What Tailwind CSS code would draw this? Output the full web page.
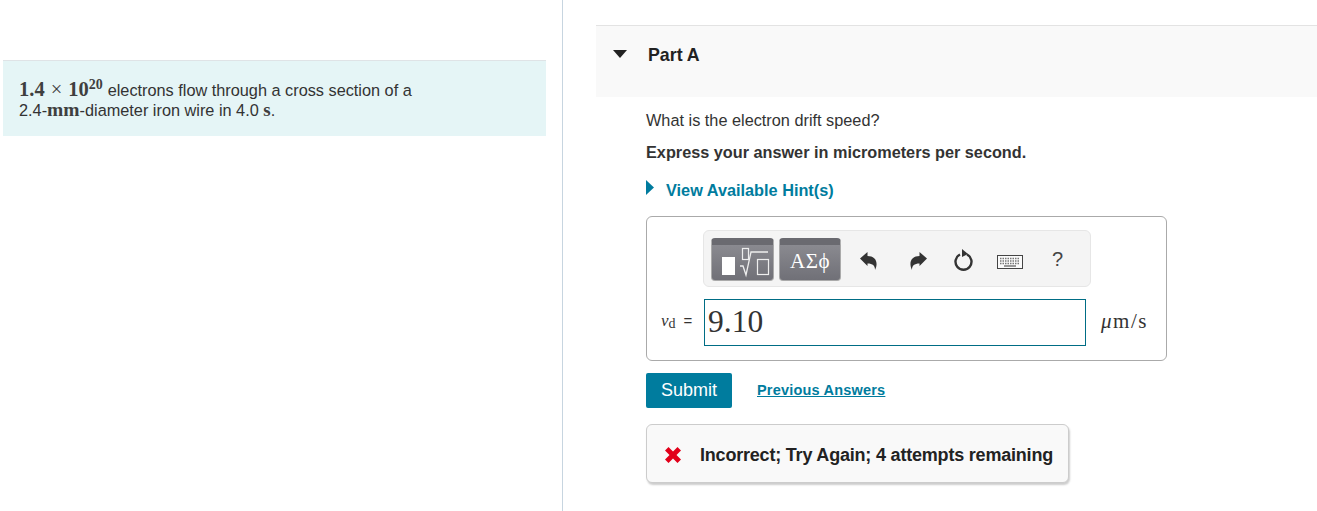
<!DOCTYPE html>
<html lang="en">
<head>
    <meta charset="UTF-8">
    <title>Part A</title>
    <script src="https://cdn.jsdelivr.net/npm/@tailwindcss/browser@4"></script>
</head>
<body class="bg-white font-['Liberation_Sans',sans-serif] text-[#333]">
<div class="flex h-[511px] w-[1317px] overflow-hidden">

    <!-- Intro -->
    <div class="w-[563px] shrink-0 border-r border-[#c7d5e0] pt-[60px] pl-[3px]">
        <div class="w-[543px] h-[76px] bg-[#e5f5f6] border-t border-[#dfe3e6] pl-[16px] pt-[19px] text-[16.3px] leading-[20px]">
            <p class="h-[21px] -mt-[1px] whitespace-nowrap"><span class="font-['Liberation_Serif',serif] text-[20.500px] font-bold text-[#3f3f3f]">1.4<span class="font-normal mx-[6px]">×</span>10<sup class="text-[14px] leading-none top-[-7px]">20</sup></span><span class="ml-[5px]">electrons flow through a cross section of a</span></p>
            <p class="h-[20px] whitespace-nowrap">2.4-<span class="font-['Liberation_Serif',serif] font-bold text-[19.5px] text-[#3f3f3f]">mm</span>-diameter iron wire in 4.0 <span class="font-['Liberation_Serif',serif] text-[19px] font-bold text-[#3f3f3f]">s</span>.</p>
        </div>
    </div>

    <!-- Part A -->
    <div class="flex-1 pl-[33px] pt-[25px]">
        <div class="flex h-[72px] bg-[#f9f9f9] border-t border-[#e3e3e3] pl-[17px] pt-[18px]">
            <svg class="mt-[6px]" width="14" height="8" viewBox="0 0 14 8"><path d="M0 0h14L7 8z" fill="#222"/></svg>
            <h2 class="ml-[21px] mt-[1px] text-[17.800px] leading-[21px] font-bold text-[#222]">Part A</h2>
        </div>

        <div class="pl-[50px]">
            <p class="mt-[13px] text-[16.3px] leading-[20px]">What is the electron drift speed?</p>
            <p class="mt-[12px] text-[16.250px] leading-[20px] font-bold">Express your answer in micrometers per second.</p>
            <div class="mt-[18px] flex h-[20px]">
                <svg width="8" height="15" viewBox="0 0 8 15"><path d="M0 0l8 7.500-8 7.500z" fill="#007b9e"/></svg>
                <a class="ml-[12px] text-[16.300px] leading-[20px] font-bold text-[#007c9e]">View Available Hint(s)</a>
            </div>

            <!-- Answer box -->
            <div class="mt-[16px] w-[521px] h-[145px] rounded-[6px] border border-[#aaa] pt-[13px]">
                <div class="ml-[56px] w-[388px] h-[57px] rounded-[6px] border border-[#e6e6e6] bg-[#f4f4f4] flex items-center pl-[7px]">
                    <div class="w-[63px] h-[43px] mt-[1px] rounded-[4px] border border-[#aaa] border-t-[7px] border-t-[#6a6a70] bg-gradient-to-b from-[#8a8a90] to-[#707077] flex items-end">
                        <svg width="61" height="35" viewBox="0 0 61 35" fill="none">
                            <rect x="10" y="12" width="13" height="18" fill="#fff"/>
                            <rect x="30.500" y="3.500" width="6" height="11" stroke="#eee" stroke-width="1.200"/>
                            <path d="M28 21l3 0 3 9 5-23h17" stroke="#eee" stroke-width="1.300"/>
                            <rect x="45.500" y="14.500" width="11" height="15" stroke="#eee" stroke-width="1.200"/>
                        </svg>
                    </div>
                    <div class="ml-[5px] w-[62px] h-[43px] mt-[1px] rounded-[4px] border border-[#aaa] border-t-[7px] border-t-[#6a6a70] bg-gradient-to-b from-[#8a8a90] to-[#707077] text-center text-white font-['Liberation_Serif',serif] text-[21px] leading-[33px] tracking-[0.5px]">ΑΣϕ</div>
                    <svg class="ml-[19px] mt-[6px]" width="18" height="20" viewBox="0 0 18 20"><path d="M0 6.500L7.500 0v4c6 0 9.500 3.500 9 9-.2 2-.8 3.500-1.500 5 .2-4-2-6.500-7.500-6.500V14z" fill="#333"/></svg>
                    <svg class="ml-[31px] mt-[6px]" width="18" height="20" viewBox="0 0 18 20"><path d="M18 6.500L10.500 0v4c-6 0-9.500 3.500-9 9 .2 2 .8 3.500 1.500 5-.2-4 2-6.500 7.500-6.500V14z" fill="#333"/></svg>
                    <svg class="ml-[26px] mt-[2px]" width="22" height="24" viewBox="0 0 22 24" fill="none"><path d="M7 6.500a8 8 0 1 0 7 0" stroke="#333" stroke-width="2.400"/><path d="M9 1l6 5-6 3z" fill="#333"/></svg>
                    <svg class="ml-[22px] mt-[7px]" width="26" height="14" viewBox="0 0 26 14" fill="none">
                        <rect x="0.500" y="0.500" width="25" height="13" fill="#fafafa" stroke="#444"/>
                        <path d="M3 3.500h20M3 6h20M3 8.500h20" stroke="#777" stroke-width="1.500" stroke-dasharray="1.500 1"/>
                        <path d="M7 11h12" stroke="#777" stroke-width="1.500"/>
                    </svg>
                    <span class="ml-[29px] text-[20px] leading-none text-[#444]">?</span>
                </div>

                <div class="mt-[12px] flex items-center h-[47px]">
                    <span class="ml-[14px] w-[43px] -mt-[3px] whitespace-nowrap font-['Liberation_Serif',serif] text-[17px] text-[#333]"><i>v</i><span class="text-[14px] relative top-[2px]">d</span><span class="ml-[8px] text-[15px] font-['Liberation_Sans',sans-serif]">=</span></span>
                    <div class="w-[382px] h-[47px] border border-[#006d85] pl-[3px] font-['Liberation_Serif',serif] text-[31.500px] leading-[44px] text-[#333]">9.10</div>
                    <span class="ml-[15px] -mt-[1px] font-['Liberation_Serif',serif] text-[21px] tracking-[1.500px] text-[#333]"><i>μ</i>m/s</span>
                </div>
            </div>

            <div class="mt-[12px] flex items-center">
                <button class="w-[86px] h-[35px] rounded-[2px] bg-[#007c9e] text-white text-[18px]">Submit</button>
                <a class="ml-[25px] text-[14.500px] font-bold text-[#007c9e] underline tracking-[0.2px]">Previous Answers</a>
            </div>

            <div class="mt-[16px] w-[423px] h-[59px] rounded-[6px] border border-[#ccc] bg-[#f9f9f9] shadow-[1px_2px_2px_rgba(0,0,0,0.2)] flex items-center pl-[17px]">
                <svg class="mt-[2px]" width="18" height="18" viewBox="0 0 18 18"><path d="M1 4.500L4.500 1 9 5.500 13.500 1 17 4.500 12.500 9 17 13.500 13.500 17 9 12.500 4.500 17 1 13.500 5.500 9z" fill="#e2001a"/></svg>
                <span class="ml-[18px] mt-[3px] text-[18px] font-bold text-[#222] tracking-[-0.2px]">Incorrect; Try Again; 4 attempts remaining</span>
            </div>
        </div>
    </div>
</div>
</body>
</html>
